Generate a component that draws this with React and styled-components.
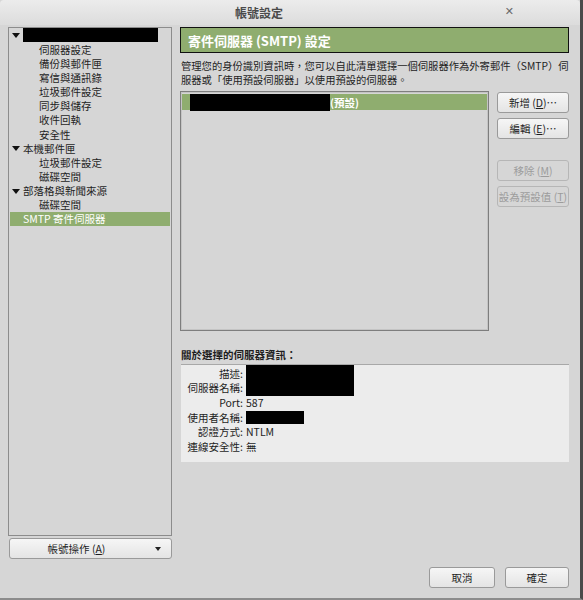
import React from 'react';
import styled, { createGlobalStyle } from 'styled-components';

const GlobalStyle = createGlobalStyle`
  html, body {
    margin: 0;
    padding: 0;
    background: #d6d6d6;
  }
  * {
    box-sizing: border-box;
  }
`;

const green = '#8fad6f';
const font = `"Noto Sans CJK TC", "Noto Sans", "Liberation Sans", sans-serif`;

const Window = styled.div`
  width: 583px;
  height: 600px;
  display: flex;
  flex-direction: column;
  background: #d6d6d6;
  font-family: ${font};
  font-size: 10.5px;
  color: #1e1e1e;
  border-right: 3px solid #4a4a4a;
  border-bottom: 2px solid #8c8c8c;
  overflow: hidden;
`;

const TitleBar = styled.div`
  height: 25px;
  flex: none;
  display: flex;
  align-items: center;
  justify-content: center;
  position: relative;
  padding-right: 62px;
  background: linear-gradient(#ececec, #dcdcdc);
  border-radius: 4px 4px 0 0;
  font-size: 12px;
  font-weight: 700;
  color: #4a4a4a;
`;

const Close = styled.span`
  position: absolute;
  right: 66px;
  top: 5px;
  font-size: 11px;
  font-weight: 700;
  color: #6a6a6a;
  font-family: "DejaVu Sans", sans-serif;
`;

const Body = styled.div`
  flex: 1;
  display: flex;
  padding: 2px 11px 0 8px;
  gap: 8px;
`;

const LeftCol = styled.div`
  width: 164px;
  flex: none;
  display: flex;
  flex-direction: column;
`;

const Tree = styled.div`
  height: 509px;
  border: 1px solid #8c8c8c;
  padding: 0 1px;
`;

const TreeRow = styled.div`
  height: 14.15px;
  display: flex;
  align-items: center;
  padding-left: ${({ $level }) => ($level ? '29px' : '13px')};
  background: ${({ $selected }) => ($selected ? green : 'transparent')};
  color: ${({ $selected }) => ($selected ? '#ffffff' : '#1e1e1e')};
  white-space: nowrap;
  position: relative;
`;

const Twisty = styled.span`
  position: absolute;
  left: 2px;
  top: 5px;
  width: 0;
  height: 0;
  border-left: 4px solid transparent;
  border-right: 4px solid transparent;
  border-top: 5px solid #111;
`;

const Redact = styled.span`
  display: inline-block;
  flex: none;
  background: #000;
  width: ${({ $w }) => $w}px;
  height: ${({ $h }) => $h}px;
`;

const Button = styled.button`
  height: 21px;
  width: ${({ $w }) => ($w ? `${$w}px` : 'auto')};
  padding: 0;
  font-family: ${font};
  font-size: 10.5px;
  color: ${({ disabled }) => (disabled ? '#9c9c9c' : '#1e1e1e')};
  background: ${({ disabled }) => (disabled ? '#d6d6d6' : 'linear-gradient(#f6f6f6, #e4e4e4)')};
  border: 1px solid ${({ disabled }) => (disabled ? '#b6b6b6' : '#9a9a9a')};
  border-radius: 3px;
  display: flex;
  align-items: center;
  justify-content: center;
  position: relative;
  white-space: nowrap;
`;

const AccountButton = styled(Button)`
  margin: 2px 0 0 1px;
  width: 163px;
  padding-right: 28px;
`;

const Arrow = styled.span`
  position: absolute;
  right: 10px;
  top: 8px;
  border-left: 3.5px solid transparent;
  border-right: 3.5px solid transparent;
  border-top: 4px solid #222;
`;

const U = styled.span`
  text-decoration: underline;
`;

const RightCol = styled.div`
  width: 389px;
  flex: none;
  display: flex;
  flex-direction: column;
`;

const Header = styled.div`
  height: 26px;
  background: ${green};
  border: 1px solid #111;
  color: #fff;
  font-size: 13px;
  font-weight: 700;
  display: flex;
  align-items: center;
  padding-left: 7px;
`;

const Desc = styled.p`
  margin: 6px 0 0 1px;
  line-height: 14px;
  font-size: 10.3px;
  white-space: nowrap;
`;

const ListArea = styled.div`
  display: flex;
  margin-top: 4px;
  gap: 8px;
`;

const ListBox = styled.div`
  width: 309px;
  height: 240px;
  border: 1px solid #7e7e7e;
  box-shadow: inset 0 0 0 1px #c4c4c4;
  padding: 2px 1px;
`;

const ListItem = styled.div`
  height: 16px;
  background: ${green};
  display: flex;
  align-items: center;
  padding-left: 8px;
  color: #fff;
  font-weight: 700;
`;

const ButtonCol = styled.div`
  display: flex;
  flex-direction: column;
  gap: 5px;
  padding-top: 1px;
`;

const Spacer = styled.div`
  height: ${({ $h }) => $h}px;
`;

const InfoTitle = styled.div`
  margin: 17px 0 0 1px;
  font-weight: 700;
  line-height: 14px;
`;

const InfoBox = styled.div`
  margin: 2px 0 0 1px;
  height: 98px;
  background: #ececec;
  border-top: 1px solid #a8a8a8;
  padding-top: 1px;
  display: grid;
  grid-template-columns: 62px 1fr;
  grid-auto-rows: 14.6px;
  column-gap: 3px;
  align-items: center;
`;

const Label = styled.div`
  text-align: right;
  white-space: nowrap;
`;

const Value = styled.div`
  grid-row: ${({ $span }) => ($span ? `span ${$span}` : 'auto')};
  display: flex;
  align-items: center;
  height: 100%;
`;

const Footer = styled.div`
  margin-top: auto;
  margin-bottom: 10px;
  display: flex;
  justify-content: flex-end;
  gap: 10px;
`;

const tree = [
  { text: null, level: 0 },
  { text: '伺服器設定', level: 1 },
  { text: '備份與郵件匣', level: 1 },
  { text: '寫信與通訊錄', level: 1 },
  { text: '垃圾郵件設定', level: 1 },
  { text: '同步與儲存', level: 1 },
  { text: '收件回執', level: 1 },
  { text: '安全性', level: 1 },
  { text: '本機郵件匣', level: 0 },
  { text: '垃圾郵件設定', level: 1 },
  { text: '磁碟空間', level: 1 },
  { text: '部落格與新聞來源', level: 0 },
  { text: '磁碟空間', level: 1 },
  { text: 'SMTP 寄件伺服器', level: 0, selected: true, leaf: true },
];

export default function App() {
  return (
    <Window>
      <GlobalStyle />
      <TitleBar>
        帳號設定
        <Close>✕</Close>
      </TitleBar>
      <Body>
        <LeftCol>
          <Tree>
            {tree.map((r, i) => (
              <TreeRow key={i} $level={r.level} $selected={r.selected}>
                {r.level === 0 && !r.leaf && <Twisty />}
                {r.text === null ? <Redact $w={135} $h={14} /> : r.text}
              </TreeRow>
            ))}
          </Tree>
          <AccountButton>
            帳號操作 (<U>A</U>)
            <Arrow />
          </AccountButton>
        </LeftCol>
        <RightCol>
          <Header>寄件伺服器 (SMTP) 設定</Header>
          <Desc>
            管理您的身份識別資訊時，您可以自此清單選擇一個伺服器作為外寄郵件（SMTP）伺
            <br />
            服器或「使用預設伺服器」以使用預設的伺服器。
          </Desc>
          <ListArea>
            <ListBox>
              <ListItem>
                <Redact $w={140} $h={17} />
                (預設)
              </ListItem>
            </ListBox>
            <ButtonCol>
              <Button $w={72}>新增 (<U>D</U>)…</Button>
              <Button $w={72}>編輯 (<U>E</U>)…</Button>
              <Spacer $h={11} />
              <Button $w={72} disabled>移除 (<U>M</U>)</Button>
              <Button $w={72} disabled>設為預設值 (<U>T</U>)</Button>
            </ButtonCol>
          </ListArea>
          <InfoTitle>關於選擇的伺服器資訊：</InfoTitle>
          <InfoBox>
            <Label>描述:</Label>
            <Value $span={2}>
              <Redact $w={108} $h={31} />
            </Value>
            <Label>伺服器名稱:</Label>
            <Label>Port:</Label>
            <Value>587</Value>
            <Label>使用者名稱:</Label>
            <Value>
              <Redact $w={58} $h={13} />
            </Value>
            <Label>認證方式:</Label>
            <Value>NTLM</Value>
            <Label>連線安全性:</Label>
            <Value>無</Value>
          </InfoBox>
          <Footer>
            <Button $w={66}>取消</Button>
            <Button $w={64}>確定</Button>
          </Footer>
        </RightCol>
      </Body>
    </Window>
  );
}
